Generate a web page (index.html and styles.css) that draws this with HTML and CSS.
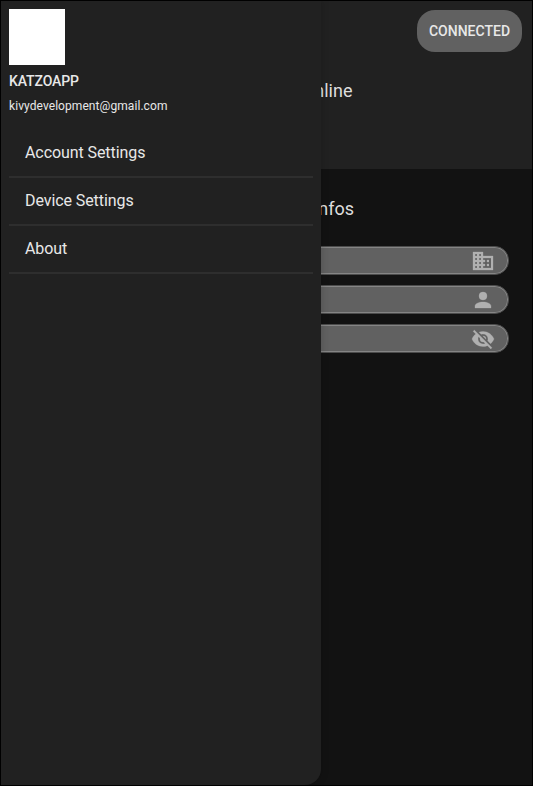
FILE: index.html
```
<!DOCTYPE html>
<html lang="en">
<head>
<meta charset="utf-8">
<title>KatzoApp</title>
<link rel="stylesheet" href="styles.css">
</head>
<body>
<div class="window">
  <main class="screen">
    <header class="header">
      <button class="status">CONNECTED</button>
      <p class="heading">Online</p>
    </header>
    <section class="infos">
      <h2 class="heading">Infos</h2>
      <div class="field">
        <svg viewBox="0 0 24 24"><path d="M18 15h-2v2h2m0-6h-2v2h2m2 6h-8v-2h2v-2h-2v-2h2v-2h-2V9h8M10 7H8V5h2m0 6H8V9h2m0 6H8v-2h2m0 6H8v-2h2M6 7H4V5h2m0 6H4V9h2m0 6H4v-2h2m0 6H4v-2h2m6-10V3H2v18h20V7H12z"/></svg>
      </div>
      <div class="field">
        <svg viewBox="0 0 24 24"><path d="M12 4a4 4 0 0 1 4 4 4 4 0 0 1-4 4 4 4 0 0 1-4-4 4 4 0 0 1 4-4m0 10c4.420 0 8 1.790 8 4v2H4v-2c0-2.210 3.580-4 8-4z"/></svg>
      </div>
      <div class="field">
        <svg viewBox="0 0 24 24"><path d="M11.830 9L15 12.160V12a3 3 0 0 0-3-3h-.17m-4.300.8l1.550 1.550c-.05.21-.08.420-.08.650a3 3 0 0 0 3 3c.220 0 .440-.03.650-.08l1.550 1.550c-.670.330-1.410.530-2.200.530a5 5 0 0 1-5-5c0-.790.200-1.530.530-2.200M2 4.270l2.280 2.280.450.450C3.080 8.300 1.780 10 1 12c1.730 4.390 6 7.500 11 7.500 1.550 0 3.030-.300 4.380-.840l.430.420L19.730 22 21 20.730 3.270 3M12 7a5 5 0 0 1 5 5c0 .640-.130 1.260-.360 1.820l2.930 2.930c1.500-1.250 2.700-2.890 3.430-4.750-1.730-4.390-6-7.500-11-7.500-1.400 0-2.740.250-4 .700l2.170 2.150C10.740 7.130 11.350 7 12 7z"/></svg>
      </div>
    </section>
  </main>
  <aside class="drawer">
    <div class="avatar"></div>
    <div class="name">KATZOAPP</div>
    <div class="email">kivydevelopment@gmail.com</div>
    <nav class="menu">
      <a class="item">Account Settings</a>
      <a class="item">Device Settings</a>
      <a class="item">About</a>
    </nav>
  </aside>
</div>
</body>
</html>
```
FILE: styles.css
```
* { box-sizing: border-box; }
body { margin: 0; background: #000; font-family: Roboto, sans-serif; color: #e8e8e8; }
.window { position: relative; width: 533px; height: 786px; border: 1px solid #000; overflow: hidden; }
.screen { height: 784px; background: #121212; }
.header { height: 168px; padding: 9px 10px 0 0; background: #212121; }
.status {
  display: block; width: 105px; height: 42px; margin-left: auto; padding: 0;
  border: 0; border-radius: 18px; background: #616161; color: #e8e8e8;
  font: 500 14px/42px Roboto, sans-serif;
}
.heading { width: 351.500px; margin: 0; text-align: right; font-size: 18px; font-weight: 400; line-height: 24px; color: #dedede; }
.header .heading { margin-top: 27px; }
.infos { padding-top: 28px; }
.infos .heading { width: 353px; margin-bottom: 25px; }
.field {
  display: flex; align-items: center; justify-content: flex-end;
  width: 484px; height: 29px; margin: 0 0 10px 24px; padding-right: 13px;
  border: 1px solid #4c4c4c; border-radius: 14px; background: #616161;
  box-shadow: inset 0 0 0 1px #858585;
}
.field svg { width: 24px; height: 24px; fill: #b0b0b0; stroke: #b0b0b0; stroke-width: .3; }
.drawer {
  position: absolute; left: 0; top: 0; width: 320px; height: 784px; padding: 8px;
  background: #212121; border-radius: 0 0 16px 0; box-shadow: 0 0 8px rgba(0, 0, 0, .2);
}
.avatar { width: 56px; height: 56px; background: #fff; }
.name { margin-top: 6px; font-size: 14px; font-weight: 500; line-height: 20px; letter-spacing: -.1px; }
.email { margin-top: 6px; font-size: 12px; line-height: 18px; letter-spacing: .07px; }
.menu { margin-top: 15px; }
.item { display: block; height: 48px; padding-left: 16px; border-bottom: 2px solid #2e2e2e; font-size: 16px; line-height: 46px; letter-spacing: -.08px; }
```
